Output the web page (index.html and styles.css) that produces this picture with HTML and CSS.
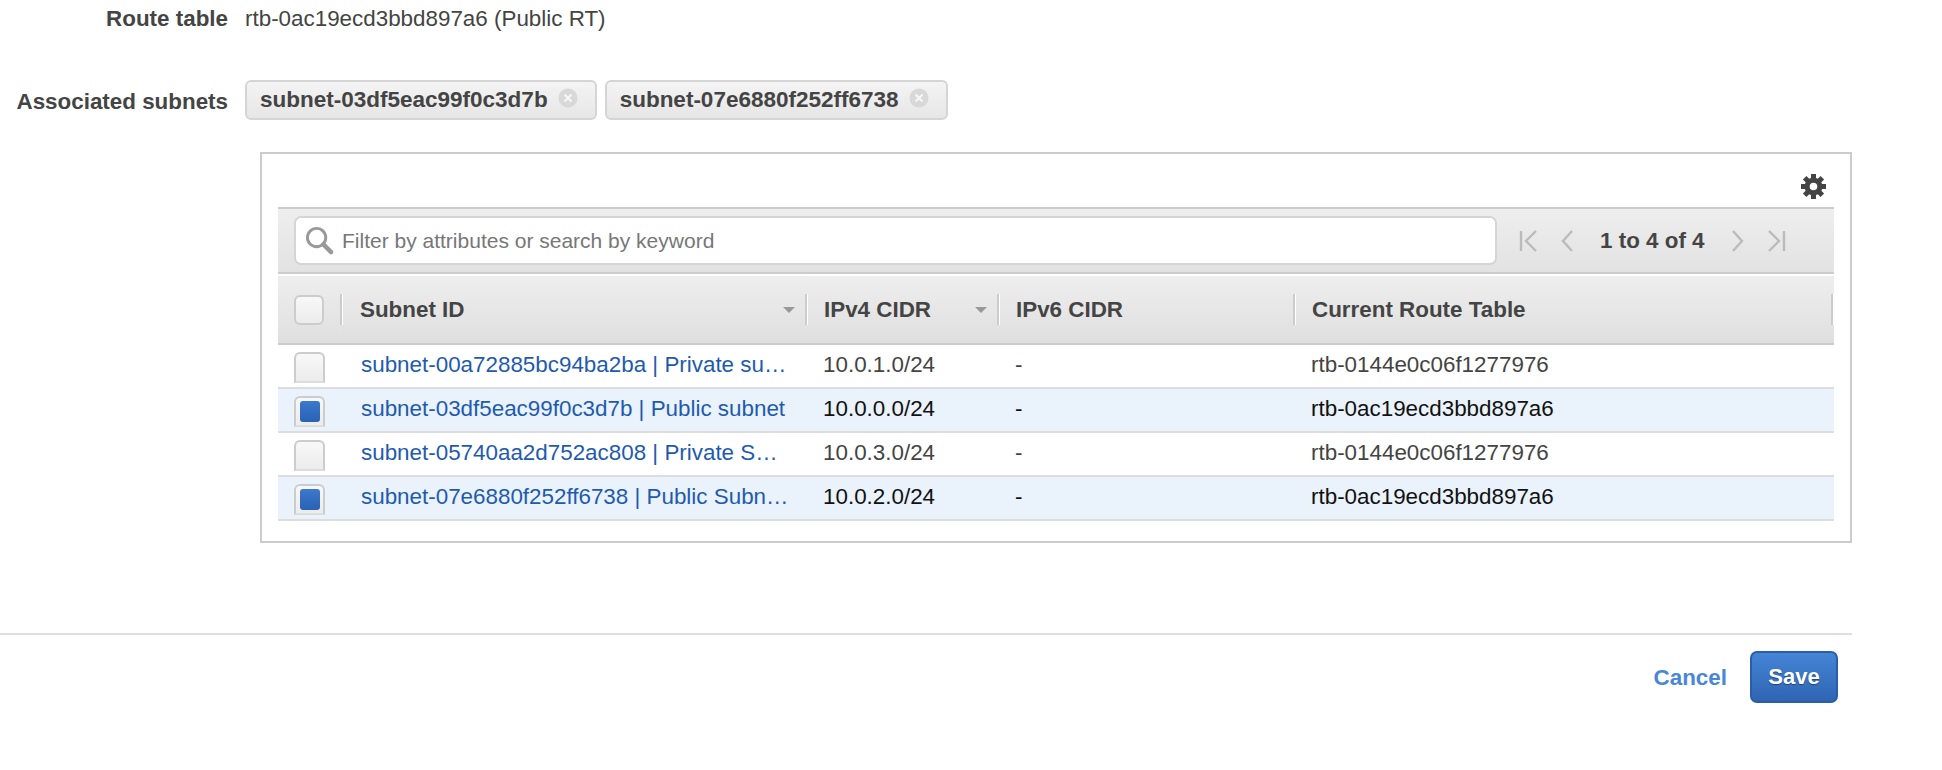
FILE: index.html
```html
<!DOCTYPE html>
<html lang="en">
<head>
  <meta charset="UTF-8">
  <title>Edit subnet associations</title>
  <link rel="stylesheet" href="styles.css">
</head>
<body>
  <div class="page">
    <div class="field route-field">
      <div class="field-label">Route table</div>
      <div class="field-value">rtb-0ac19ecd3bbd897a6 (Public RT)</div>
    </div>

    <div class="field subnets-field">
      <div class="field-label">Associated subnets</div>
      <div class="chips">
        <span class="chip">subnet-03df5eac99f0c3d7b
          <svg class="chip-x" viewBox="0 0 20 20"><circle cx="10" cy="10" r="9.500" fill="#d8d8d8"/><path d="M6.500 6.500l7 7M13.500 6.500l-7 7" stroke="#f6f6f6" stroke-width="2.200"/></svg>
        </span>
        <span class="chip">subnet-07e6880f252ff6738
          <svg class="chip-x" viewBox="0 0 20 20"><circle cx="10" cy="10" r="9.500" fill="#d8d8d8"/><path d="M6.500 6.500l7 7M13.500 6.500l-7 7" stroke="#f6f6f6" stroke-width="2.200"/></svg>
        </span>
      </div>
    </div>

    <div class="panel">
      <div class="settings-row">
        <svg class="gear" viewBox="0 0 25 25">
          <g fill="#444">
            <rect x="10" y="0" width="5" height="25"/>
            <rect x="10" y="0" width="5" height="25" transform="rotate(45 12.500 12.500)"/>
            <rect x="10" y="0" width="5" height="25" transform="rotate(90 12.500 12.500)"/>
            <rect x="10" y="0" width="5" height="25" transform="rotate(135 12.500 12.500)"/>
            <circle cx="12.500" cy="12.500" r="9"/>
          </g>
          <circle cx="12.500" cy="12.500" r="3.800" fill="#fff"/>
        </svg>
      </div>

      <div class="toolbar">
        <div class="search">
          <svg class="search-icon" viewBox="0 0 30 30"><circle cx="12" cy="12" r="9.500" fill="none" stroke="#999" stroke-width="3"/><path d="M19 19l8 8" stroke="#999" stroke-width="4.500" stroke-linecap="round"/></svg>
          <span>Filter by attributes or search by keyword</span>
        </div>
        <div class="pager">
          <svg class="pager-icon" viewBox="0 0 20 24"><path d="M2 2v20M17 2L7 12l10 10" fill="none" stroke="#bbb" stroke-width="2.400"/></svg>
          <svg class="pager-icon prev" viewBox="0 0 14 24"><path d="M12 2L3 12l9 10" fill="none" stroke="#bbb" stroke-width="2.400"/></svg>
          <span class="pager-text">1 to 4 of 4</span>
          <svg class="pager-icon next" viewBox="0 0 14 24"><path d="M2 2l9 10-9 10" fill="none" stroke="#bbb" stroke-width="2.400"/></svg>
          <svg class="pager-icon" viewBox="0 0 20 24"><path d="M18 2v20M3 2l10 10L3 22" fill="none" stroke="#bbb" stroke-width="2.400"/></svg>
        </div>
      </div>

      <table class="subnets">
        <colgroup>
          <col class="col-check"><col class="col-id"><col class="col-v4"><col class="col-v6"><col>
        </colgroup>
        <thead>
          <tr>
            <th class="check-cell"><span class="box head-box"></span></th>
            <th class="sortable id-head">Subnet ID</th>
            <th class="sortable">IPv4 CIDR</th>
            <th>IPv6 CIDR</th>
            <th>Current Route Table</th>
          </tr>
        </thead>
        <tbody>
          <tr>
            <td class="check-cell"><span class="box"></span></td>
            <td class="id-cell"><a class="subnet-link">subnet-00a72885bc94ba2ba | Private su…</a></td>
            <td>10.0.1.0/24</td>
            <td>-</td>
            <td>rtb-0144e0c06f1277976</td>
          </tr>
          <tr class="selected">
            <td class="check-cell"><span class="box checked"></span></td>
            <td class="id-cell"><a class="subnet-link">subnet-03df5eac99f0c3d7b | Public subnet</a></td>
            <td>10.0.0.0/24</td>
            <td>-</td>
            <td>rtb-0ac19ecd3bbd897a6</td>
          </tr>
          <tr>
            <td class="check-cell"><span class="box"></span></td>
            <td class="id-cell"><a class="subnet-link">subnet-05740aa2d752ac808 | Private S…</a></td>
            <td>10.0.3.0/24</td>
            <td>-</td>
            <td>rtb-0144e0c06f1277976</td>
          </tr>
          <tr class="selected">
            <td class="check-cell"><span class="box checked"></span></td>
            <td class="id-cell"><a class="subnet-link">subnet-07e6880f252ff6738 | Public Subn…</a></td>
            <td>10.0.2.0/24</td>
            <td>-</td>
            <td>rtb-0ac19ecd3bbd897a6</td>
          </tr>
        </tbody>
      </table>
    </div>

    <div class="footer">
      <a class="cancel">Cancel</a>
      <button class="save">Save</button>
    </div>
  </div>
</body>
</html>
```
FILE: styles.css
```css
* {
  box-sizing: border-box;
}
html, body {
  height: 100%;
}
body {
  margin: 0;
  background: #fff;
  color: #444;
  font-family: "Liberation Sans", Arial, sans-serif;
  font-size: 22.4px;
  overflow: hidden;
}
.page {
  width: 1852px;
}
.field {
  display: grid;
  grid-template-columns: 228px 1fr;
  column-gap: 17px;
  align-items: center;
}
.field-label {
  font-weight: bold;
  text-align: right;
  white-space: nowrap;
}
.route-field {
  padding-top: 7px;
  line-height: 23px;
}
.subnets-field {
  margin-top: 50px;
}
.subnets-field .field-label {
  padding-top: 3px;
}
.chips {
  display: flex;
  gap: 8px;
}
.chip {
  display: flex;
  align-items: center;
  justify-content: space-between;
  height: 40px;
  padding: 0 17px 1px 13px;
  border: 2px solid #d5d5d5;
  border-radius: 6px;
  background: linear-gradient(#f4f4f4, #e6e6e6);
  font-weight: bold;
  font-size: 22.5px;
  white-space: nowrap;
}
.chip-x {
  width: 20px;
  height: 20px;
  margin: 0 0 4px 10px;
}

.panel {
  margin: 32px 0 0 260px;
  height: 391px;
  padding: 0 16px;
  border: 2px solid #ccc;
}
.settings-row {
  display: flex;
  justify-content: flex-end;
  align-items: flex-end;
  height: 53px;
  padding: 0 8px 8px 0;
}
.gear {
  width: 25px;
  height: 25px;
}
.toolbar {
  display: flex;
  align-items: center;
  height: 67px;
  border-top: 2px solid #ccc;
  border-bottom: 2px solid #ccc;
  background: linear-gradient(#eee, #e2e2e2);
  padding-left: 16px;
}
.search {
  display: flex;
  align-items: center;
  flex: none;
  width: 1203px;
  height: 49px;
  padding-left: 9px;
  border: 2px solid #d5d5d5;
  border-radius: 7px;
  background: #fff;
  color: #777;
  font-size: 21px;
}
.search-icon {
  width: 29px;
  height: 29px;
  margin-right: 8px;
}
.pager {
  display: flex;
  align-items: center;
  margin-left: 22px;
  color: #444;
  font-weight: bold;
}
.pager-icon {
  width: 20px;
  height: 24px;
}
.pager-icon.prev {
  width: 14px;
  margin-left: 21px;
}
.pager-icon.next {
  width: 14px;
  margin-right: 21px;
}
.pager-text {
  margin: 0 26px 0 26px;
}

.subnets {
  width: 100%;
  margin-top: 2px;
  border-collapse: collapse;
  table-layout: fixed;
}
.col-check {
  width: 65px;
}
.col-id {
  width: 465px;
}
.col-v4 {
  width: 192px;
}
.col-v6 {
  width: 296px;
}
.subnets th {
  position: relative;
  height: 68px;
  padding: 0 16px;
  background: linear-gradient(#eee, #dfdfdf);
  border-bottom: 2px solid #ccc;
  text-align: left;
  font-weight: bold;
}
.subnets th.id-head {
  padding-left: 17px;
}
.subnets th::after {
  content: "";
  position: absolute;
  right: 0;
  top: 18px;
  bottom: 18px;
  width: 2px;
  background: #ccc;
  border-right: 1px solid #fff;
}
.subnets th.sortable::before {
  content: "";
  position: absolute;
  right: 13px;
  top: 31px;
  border: 6px solid transparent;
  border-top: 6px solid #999;
  border-bottom: 0;
}
.subnets td {
  height: 44px;
  padding: 0 15px 2px;
  border-bottom: 2px solid #ddd;
  white-space: nowrap;
  overflow: hidden;
}
.subnets .id-cell {
  padding-left: 18px;
}
.subnets th.check-cell {
  padding: 0 0 0 16px;
}
.subnets td.check-cell {
  padding: 7px 0 0 16px;
  vertical-align: top;
}
.subnet-link {
  color: #1e5bb0;
}
.selected td {
  background: #eaf2fc;
  color: #111;
}
.box {
  display: flex;
  align-items: center;
  justify-content: center;
  width: 31px;
  height: 31px;
  border: 2px solid #ccc;
  border-bottom-color: #ddd;
  border-radius: 6px 6px 0 0;
  background: linear-gradient(#f8f8f8, #ececec);
}
.head-box {
  width: 30px;
  height: 30px;
  border-color: #ccc;
  border-radius: 6px;
}
.checked::before {
  content: "";
  width: 20px;
  height: 21px;
  border-radius: 3px;
  background: linear-gradient(#3c78cc, #2a62b4);
}

.footer {
  display: flex;
  justify-content: flex-end;
  align-items: center;
  gap: 23px;
  margin-top: 90px;
  padding: 16px 14px 0 0;
  border-top: 2px solid #ddd;
}
.cancel {
  padding-top: 2px;
  color: #4a86d8;
  font-weight: bold;
}
.save {
  width: 88px;
  height: 52px;
  border: 2px solid #2a5ea8;
  border-radius: 7px;
  background: linear-gradient(#4584d6, #2f65b2);
  color: #fff;
  font-family: inherit;
  font-size: 22px;
  font-weight: bold;
  text-shadow: 0 1px 1px rgba(0, 0, 0, 0.4);
}
```
